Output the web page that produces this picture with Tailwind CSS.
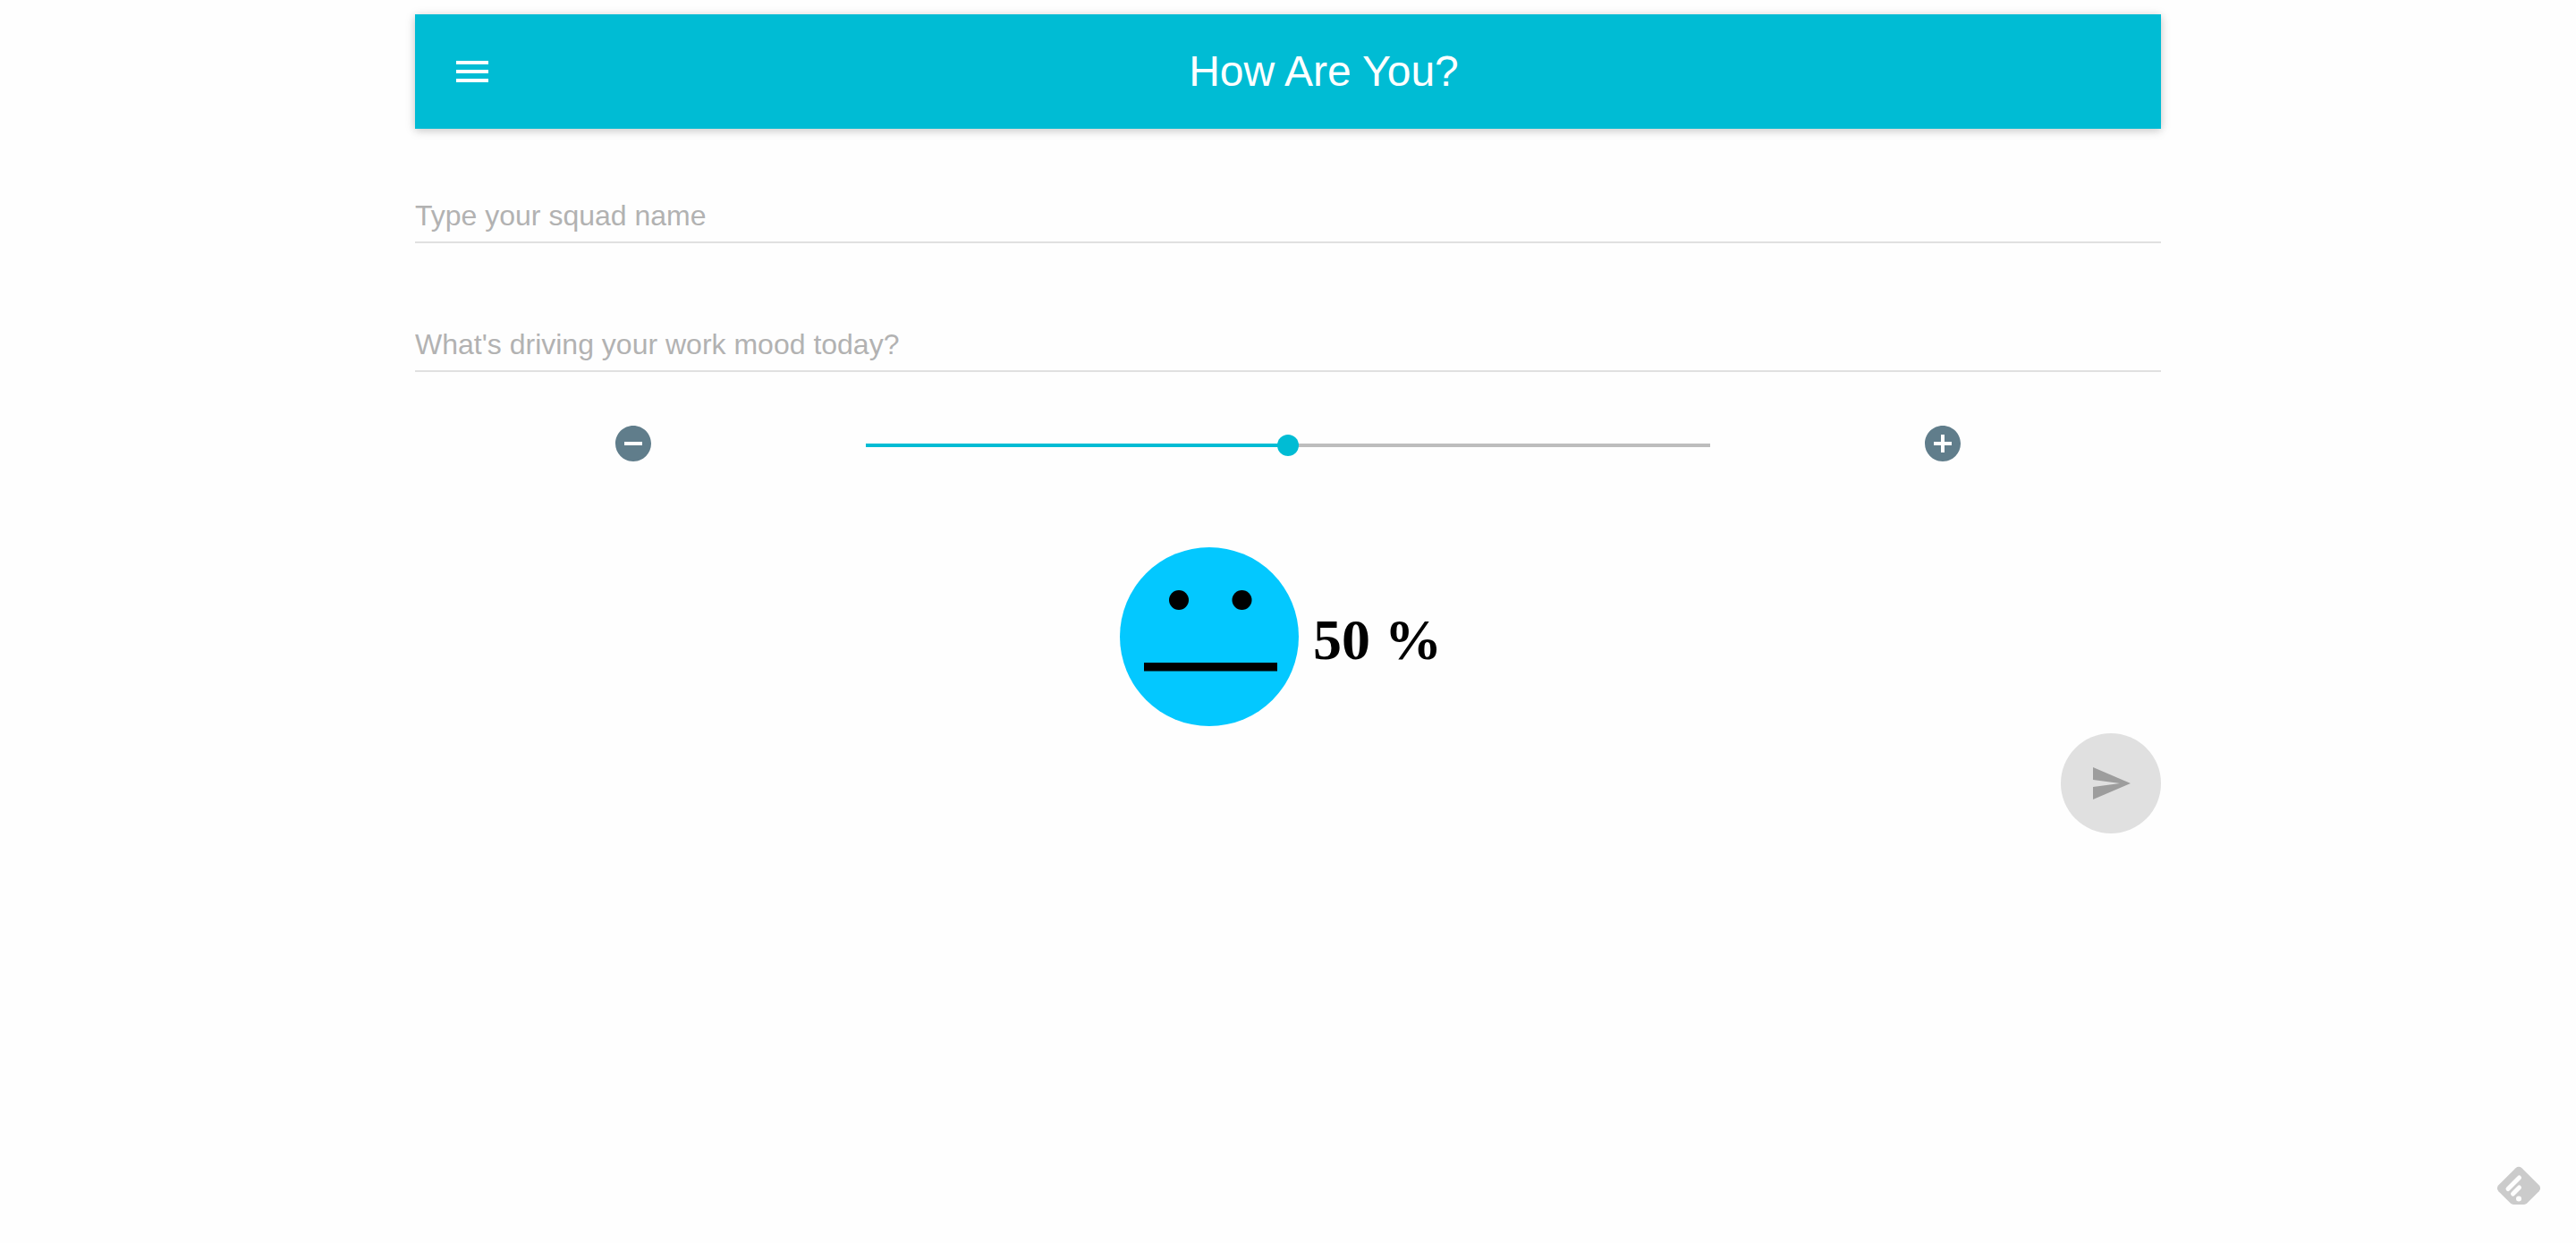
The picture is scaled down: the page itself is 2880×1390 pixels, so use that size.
<!DOCTYPE html>
<html lang="en">
<head>
<meta charset="utf-8">
<meta name="viewport" content="width=device-width, initial-scale=1">
<title>How Are You?</title>
<script src="https://cdn.jsdelivr.net/npm/@tailwindcss/browser@4"></script>
</head>
<body class="min-h-screen bg-[#fefefe] py-4 font-['Liberation_Sans',Arial,sans-serif]">
<div class="mx-auto w-[calc(66.6667%+32px)]">
  <header class="flex h-32 items-center bg-[#00bcd4] pr-12 pl-4 text-white shadow-[0_2px_12px_rgba(0,0,0,0.12),0_2px_8px_rgba(0,0,0,0.12)]">
    <button type="button" aria-label="Open menu" class="mr-4 flex size-24 items-center justify-center">
      <svg class="size-12" viewBox="0 0 24 24" fill="currentColor"><path d="M3 18h18v-2H3v2zm0-5h18v-2H3v2zm0-7v2h18V6H3z"/></svg>
    </button>
    <h1 class="flex-1 text-center text-5xl">How Are You?</h1>
  </header>

  <main>
    <form>
      <input type="text" aria-label="Squad name" placeholder="Type your squad name" class="mt-12 mb-4 block h-20 w-full border-b-2 border-[#e0e0e0] pt-5 text-[32px] outline-none placeholder:text-[#b2b2b2]">
      <input type="text" aria-label="Work mood" placeholder="What's driving your work mood today?" class="mt-16 block h-20 w-full border-b-2 border-[#e0e0e0] pt-5 text-[32px] outline-none placeholder:text-[#b2b2b2]">

      <div class="mt-14 grid grid-cols-4 items-center">
        <button type="button" aria-label="Decrease mood" class="justify-self-center text-[#607d8b]">
          <svg class="size-12" viewBox="0 0 24 24" fill="currentColor"><path d="M12 2C6.48 2 2 6.48 2 12s4.480 10 10 10 10-4.480 10-10S17.520 2 12 2zm5 11H7v-2h10v2z"/></svg>
        </button>
        <div class="col-span-2 flex px-4 pt-1">
          <input type="range" min="0" max="100" value="50" aria-label="Mood level" class="h-1 w-full appearance-none bg-linear-to-r from-[#00bcd4] from-50% to-[#bdbdbd] to-50% [&::-webkit-slider-thumb]:size-6 [&::-webkit-slider-thumb]:appearance-none [&::-webkit-slider-thumb]:rounded-full [&::-webkit-slider-thumb]:bg-[#00bcd4]">
        </div>
        <button type="button" aria-label="Increase mood" class="justify-self-center text-[#607d8b]">
          <svg class="size-12" viewBox="0 0 24 24" fill="currentColor"><path d="M12 2C6.480 2 2 6.480 2 12s4.480 10 10 10 10-4.480 10-10S17.520 2 12 2zm5 11h-4v4h-2v-4H7v-2h4V7h2v4h4v2z"/></svg>
        </button>
      </div>

      <div class="mt-[92px] flex items-center justify-center">
        <svg class="size-[200px]" viewBox="0 0 200 200" role="img" aria-label="Neutral face">
          <circle cx="100" cy="100" r="100" fill="#03c8ff"/>
          <circle cx="66" cy="59" r="11"/>
          <circle cx="136.500" cy="59" r="11"/>
          <path d="M27 129h149v9.500H27z"/>
        </svg>
        <output class="px-4 pt-2 font-['Liberation_Serif','Times_New_Roman',serif] text-[64px] leading-none font-bold">50 %</output>
      </div>

      <div class="mt-2 flex justify-end">
        <button type="submit" disabled aria-label="Send" class="flex size-28 items-center justify-center rounded-full bg-[#e0e0e0] text-[#9d9d9d]">
          <svg class="size-12" viewBox="0 0 24 24" fill="currentColor"><path d="M2.010 21L23 12 2.010 3 2 10l15 2-15 2z"/></svg>
        </button>
      </div>
    </form>
  </main>
</div>

<a href="#" aria-label="Feedly" class="fixed right-10 bottom-[42px]">
  <svg class="h-11 w-12" viewBox="0 0 48 44">
    <path fill="#cbcbcb" d="M20.500 2.300a5 5 0 0 1 7 0L46.600 21.200a5 5 0 0 1 0 7L33 41.800a5 5 0 0 1-3 1.200H18a5 5 0 0 1-3-1.200L1.400 28.200a5 5 0 0 1 0-7z"/>
    <path stroke="#fefefe" stroke-width="5" stroke-linecap="round" d="M12 25.500 24.500 13M17.500 31l7-7"/>
    <circle cx="24" cy="36.500" r="3" fill="#fefefe"/>
  </svg>
</a>
</body>
</html>
